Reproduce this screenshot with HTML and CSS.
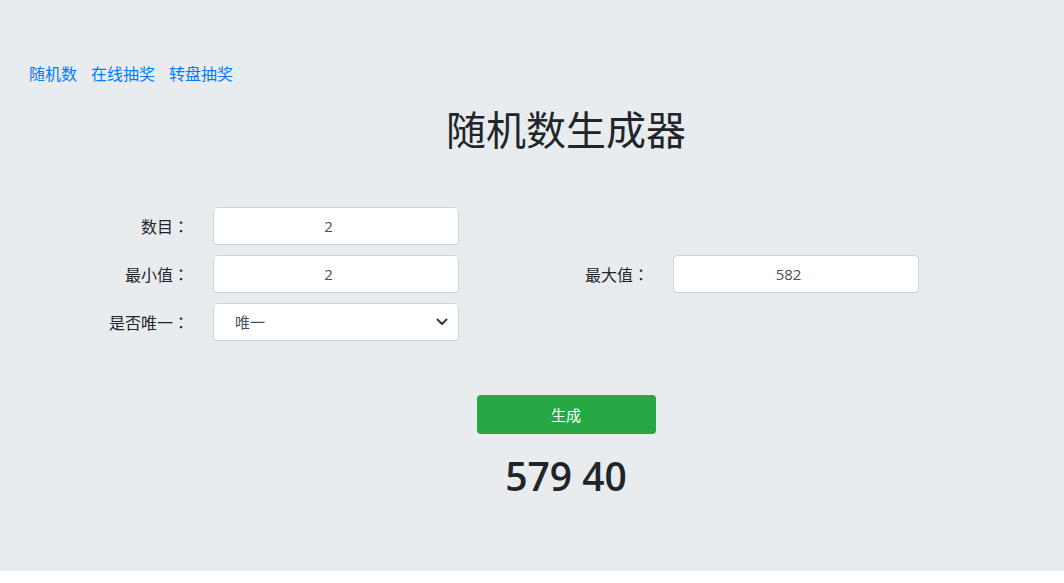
FILE: index.html
```html
<!DOCTYPE html>
<html lang="zh-CN">
<head>
<meta charset="utf-8">
<title>随机数生成器</title>
<link rel="stylesheet" href="styles.css">
</head>
<body>
<div class="page">
  <nav class="nav">
    <a href="#" class="nav-link">随机数</a>
    <a href="#" class="nav-link">在线抽奖</a>
    <a href="#" class="nav-link">转盘抽奖</a>
  </nav>
  <main class="main">
    <h1 class="title">随机数生成器</h1>
    <div class="form">
      <div class="form-row">
        <div class="field">
          <label class="field-label">数目<span class="colon" lang="zh-TW">：</span></label>
          <input class="field-input" type="text" value="2">
        </div>
      </div>
      <div class="form-row">
        <div class="field">
          <label class="field-label">最小值<span class="colon" lang="zh-TW">：</span></label>
          <input class="field-input" type="text" value="2">
        </div>
        <div class="field">
          <label class="field-label">最大值<span class="colon" lang="zh-TW">：</span></label>
          <input class="field-input" type="text" value="582">
        </div>
      </div>
      <div class="form-row">
        <div class="field">
          <label class="field-label">是否唯一<span class="colon" lang="zh-TW">：</span></label>
          <div class="select-wrap">
            <select class="field-select">
              <option>唯一</option>
              <option>不唯一</option>
            </select>
            <svg class="select-arrow" width="12" height="8" viewBox="0 0 12 8"><path d="M1.5 1.5 L6 6 L10.5 1.5" fill="none" stroke="#343a40" stroke-width="2" stroke-linecap="round" stroke-linejoin="round"/></svg>
          </div>
        </div>
      </div>
    </div>
    <div class="actions">
      <button class="btn-generate" type="button">生成</button>
      <div class="result">579 40</div>
    </div>
  </main>
</div>
</body>
</html>
```

FILE: styles.css
```css
html, body {
  margin: 0;
  padding: 0;
  background: #ffffff;
}

body {
  font-family: "Open Sans", "Noto Sans CJK SC", sans-serif;
  font-size: 16px;
  color: #212529;
}

.page {
  background: #e9ecef;
  height: 571px;
  padding-top: 62px;
  box-sizing: border-box;
}

.nav {
  display: flex;
  gap: 14px;
  padding-left: 29px;
  line-height: 24px;
}

.nav-link {
  color: #007bff;
  text-decoration: none;
  font-size: 16px;
}

.main {
  width: 960px;
  margin-left: 86px;
}

.title {
  margin: 20px 0 0;
  text-align: center;
  font-size: 40px;
  line-height: 48px;
  font-weight: 400;
  color: #212529;
}

.form {
  margin-top: 53px;
  display: flex;
  flex-direction: column;
  gap: 10px;
}

.form-row {
  display: flex;
}

.field {
  width: 460px;
  display: flex;
  align-items: center;
}

.field-label {
  width: 103px;
  text-align: right;
  margin-right: 24px;
  font-size: 16px;
  white-space: nowrap;
  color: #212529;
}

.colon {
  font-family: "Noto Sans CJK TC", sans-serif;
}

.field-input,
.field-select {
  width: 246px;
  height: 38px;
  box-sizing: border-box;
  border: 1px solid #ced4da;
  border-radius: 4px;
  background: #ffffff;
  color: #495057;
  font-family: "Open Sans", "Noto Sans CJK SC", sans-serif;
  font-size: 15px;
  outline: none;
}

.field-input {
  text-align: center;
  padding: 0 27px 0 12px;
}

.select-wrap {
  position: relative;
  width: 246px;
  height: 38px;
}

.field-select {
  appearance: none;
  -webkit-appearance: none;
  padding: 0 30px 0 21px;
  display: block;
}

.select-arrow {
  position: absolute;
  right: 11px;
  top: 15px;
  pointer-events: none;
}

.actions {
  display: flex;
  flex-direction: column;
  align-items: center;
  margin-top: 54px;
}

.btn-generate {
  width: 179px;
  height: 39px;
  border: none;
  border-radius: 4px;
  background: #28a745;
  color: #ffffff;
  font-family: "Open Sans", "Noto Sans CJK SC", sans-serif;
  font-size: 15px;
  cursor: pointer;
}

.result {
  margin-top: 18px;
  font-size: 39px;
  line-height: 48px;
  font-weight: 600;
  color: #212529;
}
```
